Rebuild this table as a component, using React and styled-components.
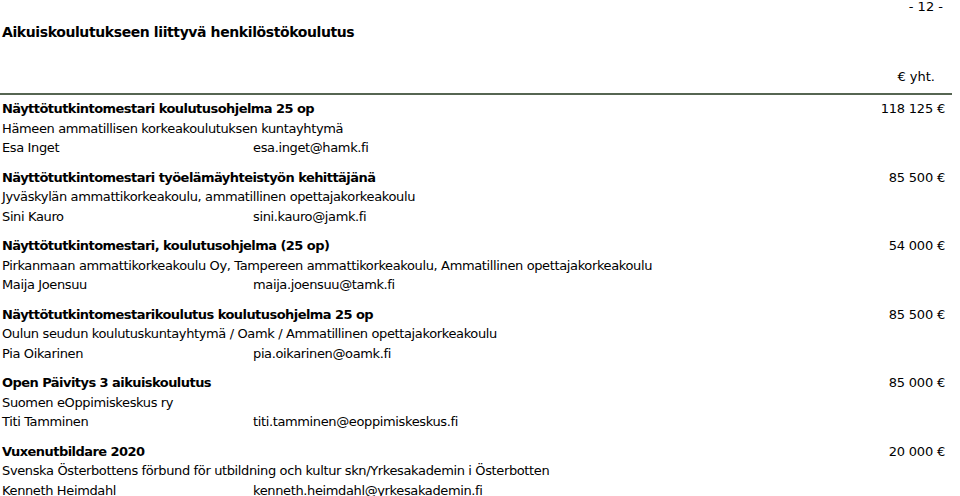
import styled, { createGlobalStyle } from "styled-components"

const GlobalStyle = createGlobalStyle`
body {
  margin: 0;
  background: #fff;
  font-family: "DejaVu Sans", Verdana, sans-serif;
  color: #000;
}
`

const Page = styled.div`
width: 960px;
height: 496px;
overflow: hidden;
box-sizing: border-box;
padding: 0 15px 0 2px;
`

const PageNumber = styled.div`
text-align: right;
font-size: 13px;
line-height: 14px;
padding-right: 2px;
`

const Title = styled.h1`
margin: 9px 0 0;
font-size: 14px;
font-weight: bold;
letter-spacing: -0.4px;
line-height: 18px;
`

const CurrencyHead = styled.div`
margin-top: 28px;
text-align: right;
font-size: 13px;
line-height: 16px;
padding-right: 10px;
`

const Rule = styled.hr`
margin: 8px -15px 4px -2px;
width: 952px;
border: 0;
border-top: 2px solid #566552;
`

const Entry = styled.div`
display: grid;
grid-template-columns: 251px 1fr auto;
font-size: 13px;
letter-spacing: -0.37px;
line-height: 19.5px;
margin-bottom: 10px;
`

const EntryTitle = styled.div`
grid-column: 1 / 3;
font-weight: bold;
letter-spacing: -0.55px;
`

const Amount = styled.div`
text-align: right;
letter-spacing: -0.2px;
`

const Org = styled.div`
grid-column: 1 / 4;
`

const Name = styled.div``

const Email = styled.div`
grid-column: 2 / 4;
`

const entries = [
  {
    title: "Näyttötutkintomestari koulutusohjelma 25 op",
    amount: "118 125 €",
    org: "Hämeen ammatillisen korkeakoulutuksen kuntayhtymä",
    name: "Esa Inget",
    email: "esa.inget@hamk.fi",
  },
  {
    title: "Näyttötutkintomestari työelämäyhteistyön kehittäjänä",
    amount: "85 500 €",
    org: "Jyväskylän ammattikorkeakoulu, ammatillinen opettajakorkeakoulu",
    name: "Sini Kauro",
    email: "sini.kauro@jamk.fi",
  },
  {
    title: "Näyttötutkintomestari, koulutusohjelma (25 op)",
    amount: "54 000 €",
    org: "Pirkanmaan ammattikorkeakoulu Oy, Tampereen ammattikorkeakoulu, Ammatillinen opettajakorkeakoulu",
    name: "Maija Joensuu",
    email: "maija.joensuu@tamk.fi",
  },
  {
    title: "Näyttötutkintomestarikoulutus koulutusohjelma 25 op",
    amount: "85 500 €",
    org: "Oulun seudun koulutuskuntayhtymä / Oamk / Ammatillinen opettajakorkeakoulu",
    name: "Pia Oikarinen",
    email: "pia.oikarinen@oamk.fi",
  },
  {
    title: "Open Päivitys 3 aikuiskoulutus",
    amount: "85 000 €",
    org: "Suomen eOppimiskeskus ry",
    name: "Titi Tamminen",
    email: "titi.tamminen@eoppimiskeskus.fi",
  },
  {
    title: "Vuxenutbildare 2020",
    amount: "20 000 €",
    org: "Svenska Österbottens förbund för utbildning och kultur skn/Yrkesakademin i Österbotten",
    name: "Kenneth Heimdahl",
    email: "kenneth.heimdahl@yrkesakademin.fi",
  },
]

const App = () => {
  return (
    <Page>
      <GlobalStyle />
      <PageNumber>- 12 -</PageNumber>
      <Title>Aikuiskoulutukseen liittyvä henkilöstökoulutus</Title>
      <CurrencyHead>€ yht.</CurrencyHead>
      <Rule />
      {entries.map((e) => (
        <Entry key={e.email}>
          <EntryTitle>{e.title}</EntryTitle>
          <Amount>{e.amount}</Amount>
          <Org>{e.org}</Org>
          <Name>{e.name}</Name>
          <Email>{e.email}</Email>
        </Entry>
      ))}
    </Page>
  )
}

export default App
